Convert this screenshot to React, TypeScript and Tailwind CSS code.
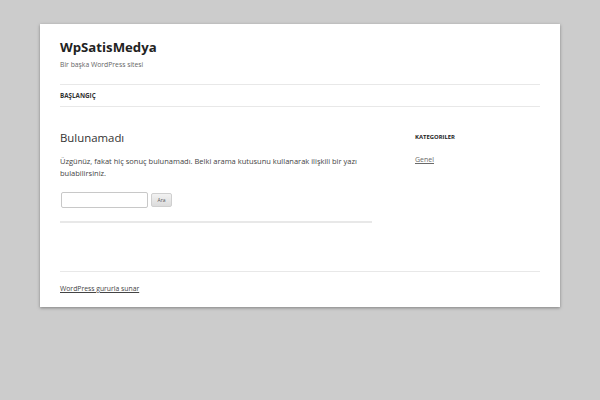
export default function App() {
  const f = { fontFamily: '"Open Sans", "DejaVu Sans", sans-serif' };
  return (
    <div className="min-h-[400px] w-[600px] bg-[#cccccc] pt-[24px]" style={f}>
      <div className="mx-[40px] bg-white px-[20px] pb-[13px] shadow-[0_1px_3px_rgba(80,80,80,0.6)]">
        <header className="pt-[14px]">
          <h1 className="text-[13.2px] font-bold leading-[18px] text-[#222]">WpSatisMedya</h1>
          <p className="mt-[4px] text-[6.8px] leading-[10px] text-[#666]">Bir başka WordPress sitesi</p>
          <nav className="mt-[14px] border-y border-[#e8e8e8] py-[5px]">
            <span className="block text-[6.3px] font-bold uppercase leading-[11px] text-[#333]">BAŞLANGIÇ</span>
          </nav>
        </header>
        <div className="mt-[24px] flex justify-between">
          <main className="w-[312px]">
            <h2 className="text-[11.4px] leading-[14px] text-[#333]">Bulunamadı</h2>
            <p className="mt-[10px] text-[7.5px] leading-[12px] text-[#444]">
              Üzgünüz, fakat hiç sonuç bulunamadı. Belki arama kutusunu kullanarak ilişkili bir yazı bulabilirsiniz.
            </p>
            <div className="mt-[13px] flex items-center gap-[3px] pl-[1px]">
              <input className="h-[16px] w-[87px] rounded-[2px] border border-[#c8c8c8] bg-white" />
              <button className="h-[14px] w-[21px] rounded-[2px] border border-[#cfcfcf] bg-gradient-to-b from-[#f2f2f2] to-[#dcdcdc] text-[5px] leading-none text-[#555]">Ara</button>
            </div>
            <div className="mt-[13px] h-[2px] bg-[#e8e8e8]" />
          </main>
          <aside className="w-[125px] pt-[1px]">
            <h3 className="text-[5.9px] font-bold uppercase leading-[10px] text-[#222]">KATEGORILER</h3>
            <a className="mt-[13px] block text-[7px] leading-[10px] text-[#6a6a6a] underline">Genel</a>
          </aside>
        </div>
        <footer className="mt-[48px] border-t border-[#e8e8e8] pt-[12px]">
          <a className="block text-[6.8px] leading-[10px] text-[#444] underline">WordPress gururla sunar</a>
        </footer>
      </div>
    </div>
  );
}
